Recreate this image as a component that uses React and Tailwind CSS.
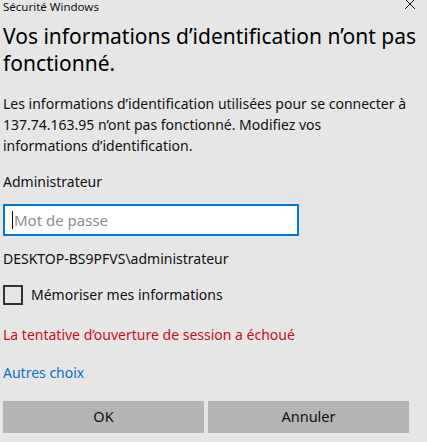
// Windows security credentials prompt (failed logon)
const fontStack = { fontFamily: '"Segoe UI", "Noto Sans", "Open Sans", sans-serif' };

const CloseIcon = () => (
  <svg className="w-[12px] h-[12px]" viewBox="0 0 12 12" fill="none" stroke="#111" strokeWidth="1">
    <path d="M1 1L11 11M11 1L1 11" />
  </svg>
);

export default function App() {
  return (
    <div
      className="w-[427px] h-[442px] bg-[#e6e6e6] text-black overflow-hidden flex flex-col"
      style={fontStack}
    >
      {/* Title bar */}
      <div className="flex items-start justify-between pl-[3px] pr-[11px] h-[13px]">
        <span className="text-[11.5px] leading-[14px] text-[#111]">Sécurité Windows</span>
        <div className="-mt-[2px]">
          <CloseIcon />
        </div>
      </div>

      {/* Heading */}
      <h1 className="mt-[10px] px-[3px] text-[21px] leading-[27px] font-normal text-black">
        Vos informations d’identification n’ont pas fonctionné.
      </h1>

      {/* Message */}
      <p className="mt-[16px] px-[3px] pr-[12px] text-[14px] leading-[21px] text-[#111]">
        Les informations d’identification utilisées pour se connecter à 137.74.163.95 n’ont pas
        fonctionné. Modifiez vos
        <br />
        informations d’identification.
      </p>

      <div className="mt-[16px] px-[3px] text-[14px] leading-[20px] text-[#111]">Administrateur</div>

      {/* Password field */}
      <div className="mt-[12px] ml-[3px] w-[296px] h-[32px] bg-white border-2 border-[#0078d7] flex items-center pl-[7px]">
        <span className="w-[1px] h-[18px] bg-black mr-[1px]" />
        <span className="text-[15px] text-[#8d8d8d]">Mot de passe</span>
      </div>

      <div className="mt-[13px] px-[3px] text-[14px] leading-[20px] text-[#111]">
        DESKTOP-BS9PFVS\administrateur
      </div>

      {/* Remember me */}
      <label className="mt-[16px] ml-[3px] flex items-center gap-[8px]">
        <span className="w-[20px] h-[20px] border-2 border-[#333] bg-transparent" />
        <span className="text-[14px] leading-[20px] text-[#111]">Mémoriser mes informations</span>
      </label>

      <div className="mt-[20px] px-[3px] text-[14px] leading-[20px] text-[#c50f1f]">
        La tentative d’ouverture de session a échoué
      </div>

      <div className="mt-[18px] px-[3px] text-[14px] leading-[20px] text-[#0a6fc9]">Autres choix</div>

      {/* Buttons */}
      <div className="mt-[18px] ml-[3px] flex gap-[4px]">
        <button className="w-[201px] h-[32px] bg-[#b4b4b4] text-[14.5px] text-[#111]">OK</button>
        <button className="w-[201px] h-[32px] bg-[#b4b4b4] text-[14.5px] text-[#111]">Annuler</button>
      </div>
    </div>
  );
}
